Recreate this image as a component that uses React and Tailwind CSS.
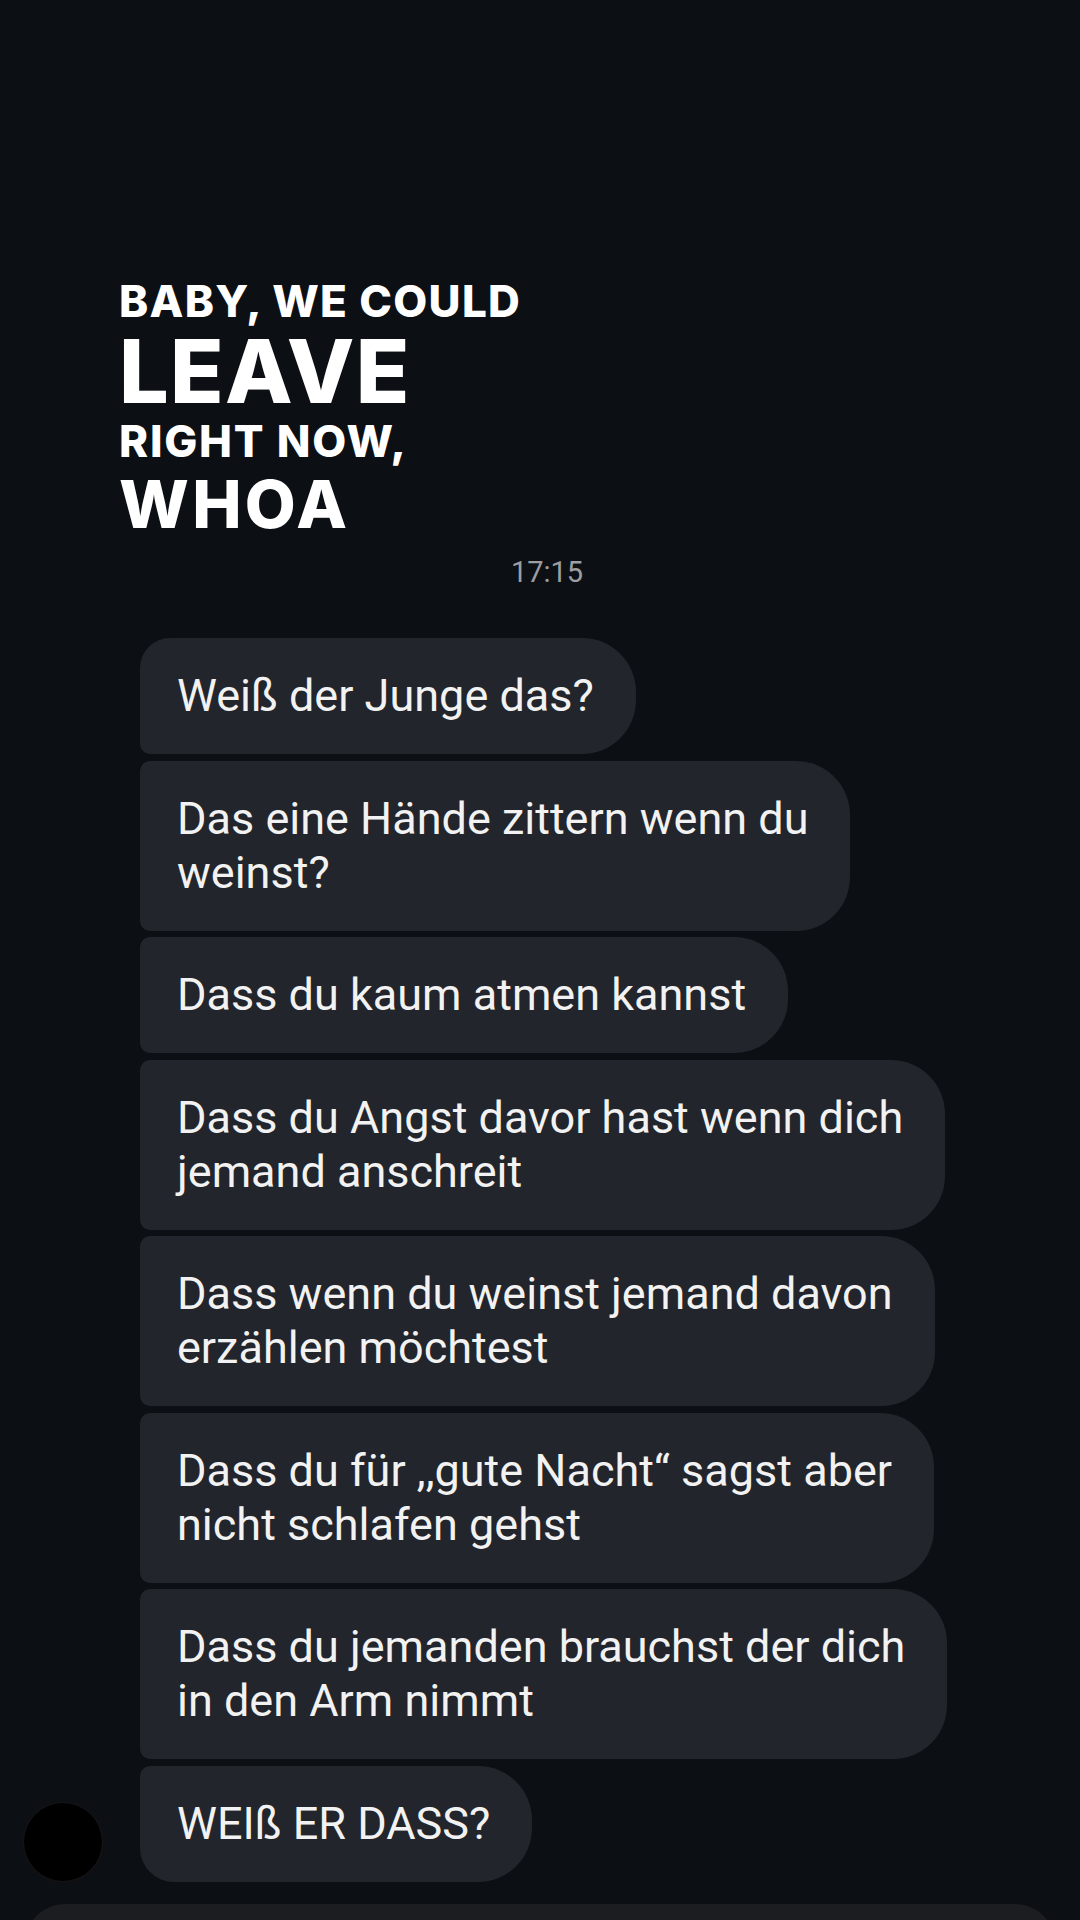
import React from 'react';

const messages = [
  ['Weiß der Junge das?'],
  ['Das eine Hände zittern wenn du', 'weinst?'],
  ['Dass du kaum atmen kannst'],
  ['Dass du Angst davor hast wenn dich', 'jemand anschreit'],
  ['Dass wenn du weinst jemand davon', 'erzählen möchtest'],
  ['Dass du für ,,gute Nacht“ sagst aber', 'nicht schlafen gehst'],
  ['Dass du jemanden brauchst der dich', 'in den Arm nimmt'],
  ['WEIß ER DASS?'],
];

const Bubble = ({ lines, first, last }) => (
  <div
    className={`w-fit bg-[#22252b] text-[#f2f2f2] text-[45px] leading-[54px] py-[31px] pl-[37px] pr-[42px] whitespace-nowrap rounded-r-[54px] ${
      first ? 'rounded-tl-[30px]' : 'rounded-tl-[10px]'
    } ${last ? 'rounded-bl-[34px]' : 'rounded-bl-[10px]'}`}
  >
    {lines.map((l, i) => (
      <div key={i}>{l}</div>
    ))}
  </div>
);

const App = () => {
  return (
    <div
      className="h-[1920px] w-[1080px] overflow-hidden bg-[#0c1014] flex flex-col"
      style={{ fontFamily: 'Roboto, "Liberation Sans", sans-serif' }}
    >
      {/* story reply card text */}
      <div
        className="pt-[276px] pl-[119px] text-white font-extrabold"
        style={{ fontFamily: 'Inter, "Liberation Sans", sans-serif' }}
      >
        <div className="text-[44px] leading-[50px] tracking-[0.03em]">BABY, WE COULD</div>
        <div className="text-[88px] leading-[91px] tracking-[0.015em]">LEAVE</div>
        <div className="text-[44px] leading-[48px] tracking-[0.04em]">RIGHT NOW,</div>
        <div className="text-[66px] leading-[78px] tracking-[0.05em]">WHOA</div>
      </div>

      <div className="mt-[11px] text-center pl-[14px] text-[29px] leading-[36px] text-[#9c9ea2]">
        17:15
      </div>

      {/* messages */}
      <div className="mt-[48px] flex items-end pl-[23px] gap-[37px]">
        <div className="w-[80px] h-[80px] rounded-full bg-black border border-[#1a1414] shrink-0" />
        <div className="flex flex-col gap-[6.5px]">
          {messages.map((m, i) => (
            <Bubble key={i} lines={m} first={i === 0} last={i === messages.length - 1} />
          ))}
        </div>
      </div>

      {/* composer */}
      <div className="mt-[22px] mx-[25px] h-[90px] rounded-[40px] bg-[#1c1d20] shrink-0" />
    </div>
  );
};

export default App;
